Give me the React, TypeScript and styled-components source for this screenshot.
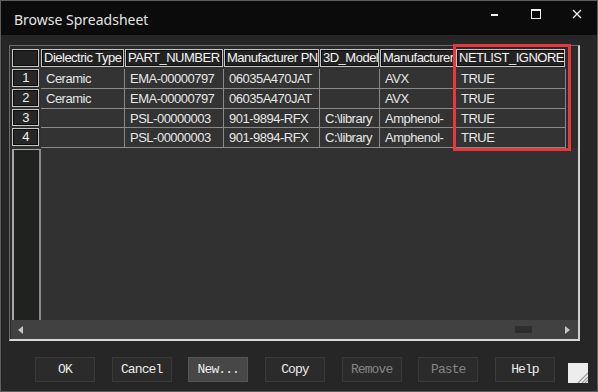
import React from 'react';
import styled, { createGlobalStyle } from 'styled-components';

const GlobalStyle = createGlobalStyle`
  html, body {
    margin: 0;
    padding: 0;
    background: #262626;
  }
  * {
    box-sizing: border-box;
  }
`;

const columns = ['Dielectric Type', 'PART_NUMBER', 'Manufacturer PN', '3D_Model', 'Manufacturer', 'NETLIST_IGNORE'];

const rows = [
    ['Ceramic', 'EMA-00000797', '06035A470JAT', '', 'AVX', 'TRUE'],
    ['Ceramic', 'EMA-00000797', '06035A470JAT', '', 'AVX', 'TRUE'],
    ['', 'PSL-00000003', '901-9894-RFX', 'C:\\library', 'Amphenol-', 'TRUE'],
    ['', 'PSL-00000003', '901-9894-RFX', 'C:\\library', 'Amphenol-', 'TRUE'],
];

const buttons = [
    { label: 'OK' },
    { label: 'Cancel' },
    { label: 'New...', focused: true },
    { label: 'Copy' },
    { label: 'Remove', disabled: true },
    { label: 'Paste', disabled: true },
    { label: 'Help' },
];

export default function App() {
    return (
        <>
            <GlobalStyle />
            <Window>
                <TitleBar>
                    <Title>Browse Spreadsheet</Title>
                    <Controls>
                        <svg width="10" height="10" viewBox="0 0 10 10">
                            <rect x="1" y="5" width="7" height="2" fill="#f0f0f0" />
                        </svg>
                        <svg width="10" height="10" viewBox="0 0 10 10">
                            <rect x="0.5" y="0.5" width="9" height="9" fill="none" stroke="#f0f0f0" strokeWidth="1" />
                            <rect x="0" y="0" width="10" height="2" fill="#f0f0f0" />
                        </svg>
                        <svg width="10" height="10" viewBox="0 0 10 10">
                            <path d="M1 1 L9 9 M9 1 L1 9" stroke="#f0f0f0" strokeWidth="1.3" />
                        </svg>
                    </Controls>
                </TitleBar>

                <Body>
                    <GridFrame>
                        <Table>
                            <Corner />
                            {columns.map(c => <HeadCell key={c}>{c}</HeadCell>)}
                            <Strip />
                            {rows.map((r, i) => (
                                <React.Fragment key={i}>
                                    <RowHead>{i + 1}</RowHead>
                                    {r.map((v, j) => <Cell key={j}>{v}</Cell>)}
                                    <Strip />
                                </React.Fragment>
                            ))}
                            <RowFill />
                        </Table>
                        <HScroll>
                            <ArrowLeft />
                            <Track />
                            <Thumb />
                            <ArrowRight />
                        </HScroll>
                    </GridFrame>

                    <ButtonRow>
                        {buttons.map(b => (
                            <Button key={b.label} focused={b.focused} disabled={b.disabled}>{b.label}</Button>
                        ))}
                        <Grip>
                            <svg width="20" height="20" viewBox="0 0 20 20">
                                <rect width="20" height="20" fill="#ededed" />
                                <path d="M20 10 L10 20 M20 14 L14 20 M20 17 L17 20" stroke="#9a9a9a" strokeWidth="1.2" />
                            </svg>
                        </Grip>
                    </ButtonRow>
                </Body>

                <Highlight />
            </Window>
        </>
    );
}

const Window = styled.div`
  position: relative;
  width: 598px;
  height: 392px;
  border: 1px solid #5e5e5e;
  background: #262626;
  display: flex;
  flex-direction: column;
  font-family: "Liberation Sans", Arial, sans-serif;
`;

const TitleBar = styled.div`
  height: 34px;
  background: #0b0b0b;
  display: flex;
  align-items: flex-start;
  padding: 0 15px 0 13px;
`;

const Title = styled.span`
  margin-top: 9px;
  font: 14px/20px "Noto Sans", "Open Sans", sans-serif;
  color: #e4e4e4;
`;

const Controls = styled.div`
  margin-left: auto;
  margin-top: 8px;
  display: flex;
  gap: 31px;
`;

const Body = styled.div`
  flex: 1;
  padding: 10px 0 0 8px;
  display: flex;
  flex-direction: column;
`;

const GridFrame = styled.div`
  width: 571px;
  height: 296px;
  border-top: 1px solid #6c6c6c;
  border-left: 1px solid #6c6c6c;
  border-right: 2px solid #cfcfcf;
  border-bottom: 2px solid #d8d8d8;
  padding: 3px 0 0 1px;
  display: flex;
  flex-direction: column;
  background: #2a2a2a;
`;

const Table = styled.div`
  flex: 1;
  margin-left: 1px;
  display: grid;
  grid-template-columns: 29px 84px 99px 96px 60px 76px 110px 1fr;
  grid-template-rows: 20px 20px 20px 19px 20px 1fr;
  background: #313131;
  overflow: hidden;
`;

const HeadCell = styled.div`
  margin: 0 1px 2px 0;
  border: 1px solid #c6c6c6;
  box-shadow: inset 0 0 0 1px #0c0c0c;
  background: #222222;
  color: #f4f4f4;
  font-size: 13px;
  line-height: 16px;
  letter-spacing: -0.5px;
  padding-left: 2px;
  white-space: nowrap;
  overflow: hidden;
`;

const Corner = styled(HeadCell)`
  margin-right: 2px;
`;

const Strip = styled.div`
  background: #2b2b2b;
`;

const RowHead = styled(HeadCell)`
  margin-right: 2px;
  padding-left: 0;
  text-align: center;
  background: #262626;
  color: #eeeeee;
`;

const Cell = styled.div`
  background: #333333;
  border-right: 1px solid #8a8a8a;
  border-bottom: 1px solid #8a8a8a;
  color: #e6e6e6;
  font-size: 13px;
  letter-spacing: -0.5px;
  padding-left: 5px;
  display: flex;
  align-items: center;
  white-space: nowrap;
  overflow: hidden;
`;

const RowFill = styled.div`
  background: #202220;
  border-left: 2px solid #a8a8a8;
  border-top: 1px solid #a8a8a8;
  border-right: 2px solid #8a8a8a;
  margin-top: 1px;
`;

const HScroll = styled.div`
  height: 19px;
  background: #414141;
  display: flex;
  align-items: center;
  padding: 0 8px 0 7px;
`;

const ArrowLeft = styled.div`
  width: 0;
  height: 0;
  border-top: 4px solid transparent;
  border-bottom: 4px solid transparent;
  border-right: 5px solid #c4c4c4;
`;

const ArrowRight = styled.div`
  width: 0;
  height: 0;
  border-top: 4px solid transparent;
  border-bottom: 4px solid transparent;
  border-left: 5px solid #c4c4c4;
`;

const Track = styled.div`
  flex: 1;
`;

const Thumb = styled.div`
  width: 17px;
  height: 7px;
  background: #2e2e2e;
  margin-right: 33px;
`;

const ButtonRow = styled.div`
  display: flex;
  align-items: flex-start;
  padding: 16px 9px 0 26px;
`;

const Button = styled.button<{ focused?: boolean }>`
  flex-shrink: 0;
  width: 60px;
  height: 25px;
  margin-right: 16.67px;
  padding: 0;
  background: ${p => (p.focused ? '#474747' : '#2b2b2b')};
  border: 1px solid ${p => (p.focused ? '#565656' : '#3a3a3a')};
  color: ${p => (p.disabled ? '#858585' : '#ececec')};
  font: 13px "Liberation Mono", "Courier New", monospace;
  letter-spacing: -0.9px;

  &:nth-of-type(7) {
    margin-right: 0;
  }
`;

const Grip = styled.div`
  flex-shrink: 0;
  margin-left: auto;
  margin-top: 6px;
  width: 20px;
  height: 20px;
  svg {
    display: block;
  }
`;

const Highlight = styled.div`
  position: absolute;
  left: 452px;
  top: 43px;
  width: 118px;
  height: 107px;
  border: 3px solid #e8383d;
  pointer-events: none;
`;
